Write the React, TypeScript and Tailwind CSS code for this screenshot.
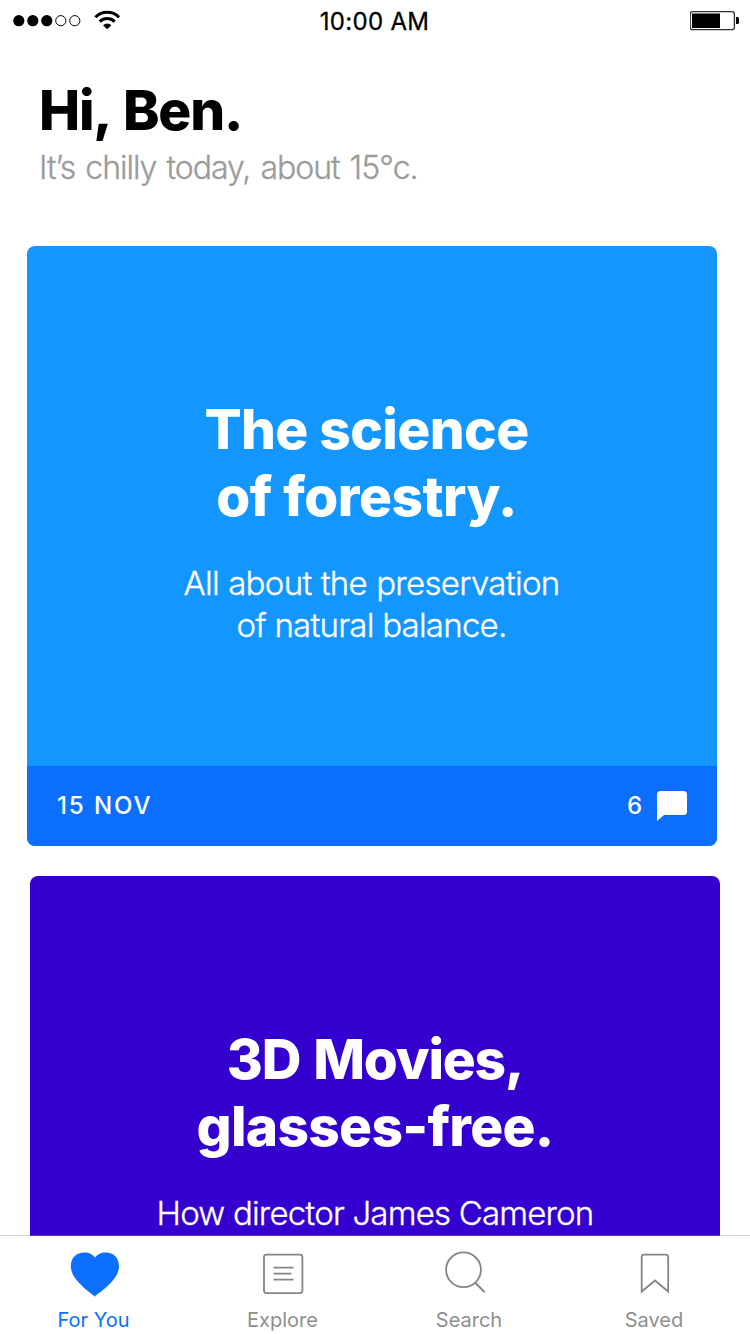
import type { ReactNode } from 'react';

function StatusBar() {
  return (
    <header className="flex h-10 shrink-0 items-start justify-between pl-[13px] pr-[11px]">
      <svg className="h-10 w-[110px]" viewBox="13 0 110 40" fill="none">
        <circle cx="18.8" cy="20.7" r="5.6" fill="#000" />
        <circle cx="32.8" cy="20.7" r="5.6" fill="#000" />
        <circle cx="46.8" cy="20.7" r="5.6" fill="#000" />
        <circle cx="60.8" cy="20.7" r="5.1" stroke="#000" />
        <circle cx="74.8" cy="20.7" r="5.1" stroke="#000" />
        <path d="M95.4 17.2A16.8 16.8 0 0 1 119 17.2" stroke="#000" strokeWidth="3" />
        <path d="M99.7 21.6A10.8 10.8 0 0 1 114.7 21.6" stroke="#000" strokeWidth="3" />
        <path d="M103 25.2A6 6 0 0 1 111.4 25.2L107.2 29.2Z" fill="#000" />
      </svg>
      <div className="pt-[6px] text-[24px] leading-8 tracking-[0.3px] [-webkit-text-stroke:0.3px]">10:00 AM</div>
      <svg className="ml-[64px] h-10 w-[49px]" viewBox="690 0 49 40" fill="none">
        <rect x="690.2" y="11.7" width="44.2" height="18" rx="2.5" stroke="#333" strokeWidth="1.3" />
        <rect x="692" y="13.5" width="28" height="14.5" fill="#000" />
        <path d="M736 17h1.5q1.5 0 1.5 1.500v4q0 1.500-1.500 1.500H736Z" fill="#000" />
      </svg>
    </header>
  );
}

function Card({ className, children, footer }: { className: string; children: ReactNode; footer?: ReactNode }) {
  return (
    <article className={`flex h-[600px] w-[690px] shrink-0 flex-col overflow-hidden rounded-[8px] text-white ${className}`}>
      <div className="flex flex-1 flex-col items-center pt-[150px]">{children}</div>
      {footer}
    </article>
  );
}

function Tab({ label, className, labelClass, children }: { label: string; className: string; labelClass: string; children: ReactNode }) {
  return (
    <button className={`flex flex-col items-center ${className}`}>
      <svg className="h-[50px] w-[56px]" viewBox="0 0 56 50" fill="none">{children}</svg>
      <span className={`mt-[6px] text-[20px] leading-7 whitespace-nowrap ${labelClass}`}>{label}</span>
    </button>
  );
}

export default function App() {
  return (
    <div className="flex h-[1334px] w-[750px] flex-col overflow-hidden bg-white font-['Inter','Liberation_Sans',sans-serif] text-black">
      <StatusBar />
      <main className="flex min-h-0 flex-1 flex-col overflow-hidden">
        <section className="h-[206px] shrink-0 pt-[37px] pl-[39px]">
          <h1 className="text-[55px] leading-[67px] font-extrabold tracking-[-1.2px] [word-spacing:3px] whitespace-nowrap">Hi, Ben.</h1>
          <p className="mt-[4px] text-[32px] leading-10 font-light tracking-[-1px] [word-spacing:2px] whitespace-nowrap text-[#9b9b9b] [-webkit-text-stroke:0.35px]">It’s chilly today, about 15°c.</p>
        </section>
        <Card
          className="ml-[27px] bg-[#1496ff]"
          footer={
            <div className="flex h-20 items-center justify-between bg-[#0d6fff] pr-[30px] pl-[30px] text-[24px] font-medium">
              <span className="tracking-[1.9px]">15 NOV</span>
              <span className="flex items-center gap-[15px]">
                6
                <svg className="h-[30px] w-[30px]" viewBox="0 0 30 30" fill="#fff">
                  <path d="M3.500 0H26.500Q30 0 30 3.500V20.500Q30 24 26.500 24H7L0 30V3.500Q0 0 3.500 0Z" />
                </svg>
              </span>
            </div>
          }
        >
          <h2 className="flex flex-col items-center pr-[11px] text-[55px] leading-[67px] font-extrabold whitespace-nowrap">
            <span className="tracking-[-0.6px]">The science</span>
            <span className="tracking-[-0.5px]">of forestry.</span>
          </h2>
          <p className="mt-[32px] flex flex-col items-center pr-[1px] text-[33px] leading-[42px] font-light whitespace-nowrap [-webkit-text-stroke:0.35px]">
            <span className="tracking-[-0.68px] [word-spacing:0.5px]">All about the preservation</span>
            <span className="tracking-[-0.76px]">of natural balance.</span>
          </p>
        </Card>
        <Card className="mt-[30px] ml-[30px] bg-[#3300d0]">
          <h2 className="flex flex-col items-center text-[55px] leading-[67px] font-extrabold whitespace-nowrap">
            <span className="tracking-[-1.2px] [word-spacing:2px]">3D Movies,</span>
            <span className="tracking-[-0.7px]">glasses-free.</span>
          </h2>
          <p className="mt-[32px] text-[33px] leading-[42px] font-light tracking-[-0.8px] whitespace-nowrap [-webkit-text-stroke:0.35px]">How director James Cameron</p>
        </Card>
      </main>
      <nav className="-mt-px flex h-[99px] shrink-0 items-start border-t border-[#888888]/40 bg-white bg-clip-padding pt-[14px] text-[#8e8e8e]">
        <Tab label="For You" className="w-[187px]" labelClass="text-[#0d6fff]">
          <path d="M29 46.700C26.500 44 4.800 30.500 4.800 16.500C4.800 7.500 10.500 2.500 18.500 2.500C23 2.500 27 4.500 29 7.800C31 4.500 35 2.500 39.500 2.500C47.500 2.500 53 7.500 53 16.500C53 30.500 31.500 43.500 29 46.500Z" fill="#0d6fff" />
        </Tab>
        <Tab label="Explore" className="w-[191px]" labelClass="">
          <rect x="9" y="4.700" width="38.400" height="38.400" rx="2.500" stroke="#858585" strokeWidth="1.800" />
          <path d="M18.500 17.700H38.500M18.500 23.700H36.500M18.500 29.700H38.500" stroke="#858585" strokeWidth="1.800" />
        </Tab>
        <Tab label="Search" className="w-[182px]" labelClass="">
          <circle cx="22.500" cy="19.800" r="17.400" stroke="#858585" strokeWidth="1.800" />
          <path d="M34 32.500L43.500 42" stroke="#858585" strokeWidth="1.900" />
        </Tab>
        <Tab label="Saved" className="w-[188px]" labelClass="">
          <path d="M15.700 41.500V7.200Q15.700 4.700 18.200 4.700H39.700Q42.200 4.700 42.200 7.200V41.500L29 30.500Z" stroke="#858585" strokeWidth="1.800" />
        </Tab>
      </nav>
    </div>
  );
}
